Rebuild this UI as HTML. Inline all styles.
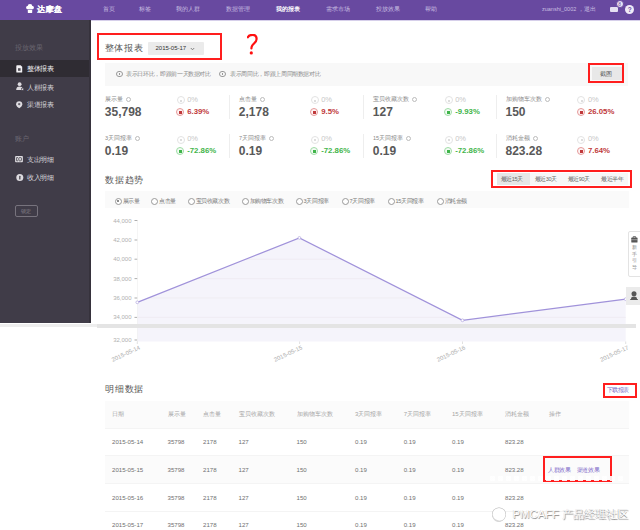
<!DOCTYPE html>
<html><head><meta charset="utf-8">
<style>
*{margin:0;padding:0;box-sizing:border-box}
html,body{width:640px;height:530px;overflow:hidden;background:#fff}
body{position:relative;font-family:"Liberation Sans",sans-serif;color:#666}
.a{position:absolute;white-space:nowrap}
#nav{left:0;top:0;width:640px;height:20.3px;background:#6849a0}
.ni{font-size:6px;color:#c9bfe0;top:6px;line-height:7px}
#side{left:0;top:20px;width:91px;height:303px;background:#403c48}
.sg{font-size:6.5px;color:#6a6670;line-height:7px}
.si{font-size:6.5px;color:#d8d6dc;line-height:7px;letter-spacing:-0.5px}
.ico{position:absolute;background:#e8e6ea}
.red{position:absolute;border:2px solid #ff1e1e}
.lbl{font-size:5.5px;color:#888;line-height:6px}
.big{font-size:12px;font-weight:bold;color:#595959;line-height:13px}
.pct0{font-size:7.5px;color:#c8c8c8;line-height:9px}
.pr{font-size:7.8px;font-weight:bold;color:#c0393b;line-height:9px}
.pg{font-size:7.8px;font-weight:bold;color:#3fb54a;line-height:9px}
.circ{position:absolute;border-radius:50%}
.vd{position:absolute;width:1px;background:#eee}
.h2{font-size:9.45px;letter-spacing:0.75px;color:#555;line-height:11px}
.rd{font-size:5.5px;color:#888;line-height:6px;letter-spacing:-0.35px}
.th{font-size:6px;color:#a5a5a5;line-height:6px}
.td{font-size:6.1px;color:#707070;line-height:6px}
.c0{width:8px;height:8px;border:0.9px solid #e3e3e3}
.c0 i{position:absolute;left:2.4px;top:2.4px;width:2.2px;height:2.2px;background:#ddd}
.cb{width:8px;height:8px;border:1px solid}
.cb i{position:absolute;left:2.2px;top:2.2px;width:2.6px;height:2.6px}
.prc{border-color:#e59a9a;background:#fdf3f3}.prc i{background:#c0393b}
.pgc{border-color:#9fdca6;background:#f3fbf4}.pgc i{background:#3fb54a}
.qi{display:inline-block;width:5px;height:5px;border:0.8px solid #bbb;border-radius:50%;margin-left:3px;vertical-align:-0.5px}
</style></head><body>

<!-- NAV -->
<div id="nav" class="a"></div>
<div class="a" style="left:25.5px;top:3.7px;width:8px;height:10px">
  <svg style="display:block" width="8" height="10" viewBox="0 0 8 10"><circle cx="2" cy="3.6" r="1.9" fill="#fff"/><circle cx="4" cy="2.4" r="2.3" fill="#fff"/><circle cx="6" cy="3.6" r="1.9" fill="#fff"/><rect x="1.8" y="4.2" width="4.4" height="4.8" rx="0.4" fill="#fff"/><rect x="1.2" y="5.4" width="5.6" height="0.6" fill="#6849a0"/></svg>
</div>
<div class="a" style="left:37px;top:4.5px;font-size:8px;font-weight:bold;color:#fff;line-height:10px;letter-spacing:0.4px;text-shadow:0.25px 0 0 #fff">达摩盘</div>
<div class="a ni" style="left:103px">首页</div>
<div class="a ni" style="left:139px">标签</div>
<div class="a ni" style="left:176px">我的人群</div>
<div class="a ni" style="left:226px">数据管理</div>
<div class="a ni" style="left:276px;color:#fff;font-weight:bold">我的报表</div>
<div class="a ni" style="left:326px">需求市场</div>
<div class="a ni" style="left:376px">投放效果</div>
<div class="a ni" style="left:425px">帮助</div>
<div class="a ni" style="left:542px;font-size:5.5px">zuanshi_0002 ，退出</div>
<div class="a" style="left:609.5px;top:7px;width:8px;height:5px;background:#e6e0f2;border-radius:1px"></div>
<div class="circ" style="left:615.5px;top:-0.5px;width:8px;height:8px;background:#efeaf7;border:0.8px solid #6849a0"></div><div class="a" style="left:618.2px;top:0.6px;font-size:5px;color:#6849a0;line-height:6px">8</div>
<div class="circ" style="left:625.3px;top:5px;width:9px;height:9px;background:#efeaf7"></div>
<div class="a" style="left:627.7px;top:5px;font-size:6.5px;font-weight:bold;color:#6849a0;line-height:9px">?</div>
<div class="a" style="left:91px;top:20.2px;width:549px;height:1.2px;background:#d6cfea"></div>

<!-- SIDEBAR -->
<div id="side" class="a"></div>
<div class="a" style="left:89.3px;top:20px;width:1.7px;height:303px;background:#36323c"></div>
<div class="a sg" style="left:15px;top:44px">投放效果</div>
<div class="a" style="left:0;top:60px;width:89.3px;height:17px;background:#2f2c33"></div>
<svg class="a" style="left:16px;top:64.5px" width="7" height="8" viewBox="0 0 7 8"><path d="M0.3,1 Q0.3,0.2 1,0.2 L4.6,0.2 L6.2,1.8 L6.2,7 Q6.2,7.6 5.6,7.6 L1,7.6 Q0.3,7.6 0.3,7 Z" fill="#f2f1f4"/><rect x="2" y="3.2" width="2.6" height="2.6" fill="#55525a"/></svg>
<div class="a si" style="left:27px;top:65px;color:#f4f3f6">整体报表</div>
<svg class="a" style="left:15.5px;top:82.2px" width="8" height="8.5" viewBox="0 0 8 8.5"><circle cx="3.6" cy="2.2" r="1.9" fill="#dddbe0"/><path d="M0.2,8 Q0.2,4.6 3.6,4.6 Q6.4,4.6 6.8,6.5 L6.8,8 Z" fill="#dddbe0"/><rect x="5.3" y="6.2" width="2.2" height="2" fill="#dddbe0" stroke="#403c48" stroke-width="0.5"/></svg>
<div class="a si" style="left:27px;top:83.5px">人群报表</div>
<svg class="a" style="left:16px;top:101.3px" width="7" height="7.5" viewBox="0 0 7 7.5"><path d="M3.2,0.2 C5.2,0.2 6.3,1.5 6.3,3.2 C6.3,5 4.6,6.5 3.2,7.3 C1.8,6.5 0.1,5 0.1,3.2 C0.1,1.5 1.2,0.2 3.2,0.2 Z" fill="#dddbe0"/><circle cx="3.2" cy="3.1" r="1.2" fill="#6a6670"/></svg>
<div class="a si" style="left:27px;top:101px">渠道报表</div>
<div class="a sg" style="left:15px;top:134.5px">账户</div>
<svg class="a" style="left:15px;top:156.2px" width="8" height="6.5" viewBox="0 0 8 6.5"><rect x="0.1" y="0.1" width="7.8" height="6.2" rx="0.8" fill="#dddbe0"/><path d="M3,1.6 L1.6,1.6 L1.6,4.8 L3,4.8" fill="none" stroke="#55525a" stroke-width="0.9"/><rect x="3.8" y="1.6" width="2.6" height="3.2" rx="0.6" fill="none" stroke="#55525a" stroke-width="0.9"/></svg>
<div class="a si" style="left:27px;top:155.5px">支出明细</div>
<svg class="a" style="left:15.5px;top:173.5px" width="8" height="8" viewBox="0 0 8 8"><circle cx="3.8" cy="3.6" r="3.5" fill="#dddbe0"/><rect x="3.1" y="1.8" width="1.4" height="3.8" rx="0.5" fill="#55525a"/></svg>
<div class="a si" style="left:27px;top:173.5px">收入明细</div>
<div class="a" style="left:15px;top:205px;width:23px;height:12px;border:1px solid #77737d;border-radius:2px"></div>
<div class="a" style="left:21px;top:208px;font-size:5px;color:#8a8690;line-height:6px">锁定</div>

<!-- HEADER -->
<div class="red" style="left:97px;top:33px;width:125px;height:27px"></div>
<div class="a h2" style="left:104.5px;top:41.5px;font-size:9.45px">整体报表</div>
<div class="a" style="left:148px;top:41.5px;width:56px;height:13px;background:#ebebeb;border-radius:1px"></div>
<div class="a" style="left:155.5px;top:44.5px;font-size:6px;color:#333;line-height:7px">2015-05-17</div><svg class="a" style="left:189.5px;top:46.5px" width="5" height="4" viewBox="0 0 5 4"><path d="M0.8,1 L2.5,2.8 L4.2,1" fill="none" stroke="#777" stroke-width="0.9"/></svg>
<svg class="a" style="left:246.5px;top:33.7px" width="12" height="22" viewBox="0 0 12 22"><path d="M0.8,3.3 C1.6,1.3 3.6,0.9 5.5,0.9 C8.5,0.9 9.6,2.8 9.6,5 C9.6,8 6.8,9.3 5.2,11.6 C4.6,12.6 4.4,13.4 4.4,14.5" fill="none" stroke="#ff1010" stroke-width="2.2" stroke-linecap="round"/><circle cx="4.3" cy="18.9" r="1.6" fill="#ff1010"/></svg>

<!-- INFO BAR -->
<div class="a" style="left:105px;top:63px;width:523px;height:23px;background:#f8f8f8"></div>
<div class="circ" style="left:116.3px;top:70.8px;width:6.6px;height:6.6px;border:0.9px solid #999"><i style="position:absolute;left:1.6px;top:1.6px;width:1.6px;height:1.6px;background:#999"></i></div>
<div class="a rd" style="left:126px;top:71px;letter-spacing:-0.35px">表示日环比，即跟前一天数据对比</div>
<div class="circ" style="left:219.3px;top:70.8px;width:6.6px;height:6.6px;border:0.9px solid #999"><i style="position:absolute;left:1.6px;top:1.6px;width:1.6px;height:1.6px;background:#999"></i></div>
<div class="a rd" style="left:230px;top:71px;letter-spacing:-0.35px">表示周同比，即跟上周同期数据对比</div>
<div class="a" style="left:591.5px;top:66.5px;width:30px;height:13.5px;background:#e8e8e8"></div>
<div class="a" style="left:600px;top:70.5px;font-size:5.5px;color:#555;line-height:6px">截图</div>
<div class="red" style="left:588px;top:63px;width:36px;height:19.5px"></div>

<!-- STATS -->
<div class="a lbl" style="left:105.0px;top:96.0px">展示量<span class="qi"></span></div>
<div class="a big" style="left:104.8px;top:105.8px">35,798</div>
<div class="circ c0" style="left:176.6px;top:96.3px"><i></i></div>
<div class="a pct0" style="left:187.2px;top:95.0px">0%</div>
<div class="circ cb prc" style="left:176.3px;top:108.0px"><i></i></div>
<div class="a pr" style="left:187.2px;top:106.5px">6.39%</div>
<div class="vd" style="left:229.0px;top:94.5px;height:24px"></div>
<div class="a lbl" style="left:239.0px;top:96.0px">点击量<span class="qi"></span></div>
<div class="a big" style="left:238.8px;top:105.8px">2,178</div>
<div class="circ c0" style="left:310.6px;top:96.3px"><i></i></div>
<div class="a pct0" style="left:321.2px;top:95.0px">0%</div>
<div class="circ cb prc" style="left:310.3px;top:108.0px"><i></i></div>
<div class="a pr" style="left:321.2px;top:106.5px">9.5%</div>
<div class="vd" style="left:363.0px;top:94.5px;height:24px"></div>
<div class="a lbl" style="left:373.0px;top:96.0px">宝贝收藏次数<span class="qi"></span></div>
<div class="a big" style="left:372.8px;top:105.8px">127</div>
<div class="circ c0" style="left:444.6px;top:96.3px"><i></i></div>
<div class="a pct0" style="left:455.2px;top:95.0px">0%</div>
<div class="circ cb pgc" style="left:444.3px;top:108.0px"><i></i></div>
<div class="a pg" style="left:455.2px;top:106.5px">-9.93%</div>
<div class="vd" style="left:495.7px;top:94.5px;height:24px"></div>
<div class="a lbl" style="left:505.7px;top:96.0px">加购物车次数<span class="qi"></span></div>
<div class="a big" style="left:505.5px;top:105.8px">150</div>
<div class="circ c0" style="left:577.3px;top:96.3px"><i></i></div>
<div class="a pct0" style="left:587.9px;top:95.0px">0%</div>
<div class="circ cb prc" style="left:577.0px;top:108.0px"><i></i></div>
<div class="a pr" style="left:587.9px;top:106.5px">26.05%</div>
<div class="a lbl" style="left:105.0px;top:135.3px">3天回报率<span class="qi"></span></div>
<div class="a big" style="left:104.8px;top:145.1px">0.19</div>
<div class="circ c0" style="left:176.6px;top:135.6px"><i></i></div>
<div class="a pct0" style="left:187.2px;top:134.3px">0%</div>
<div class="circ cb pgc" style="left:176.3px;top:147.3px"><i></i></div>
<div class="a pg" style="left:187.2px;top:145.8px">-72.86%</div>
<div class="vd" style="left:229.0px;top:133.8px;height:24px"></div>
<div class="a lbl" style="left:239.0px;top:135.3px">7天回报率<span class="qi"></span></div>
<div class="a big" style="left:238.8px;top:145.1px">0.19</div>
<div class="circ c0" style="left:310.6px;top:135.6px"><i></i></div>
<div class="a pct0" style="left:321.2px;top:134.3px">0%</div>
<div class="circ cb pgc" style="left:310.3px;top:147.3px"><i></i></div>
<div class="a pg" style="left:321.2px;top:145.8px">-72.86%</div>
<div class="vd" style="left:363.0px;top:133.8px;height:24px"></div>
<div class="a lbl" style="left:373.0px;top:135.3px">15天回报率<span class="qi"></span></div>
<div class="a big" style="left:372.8px;top:145.1px">0.19</div>
<div class="circ c0" style="left:444.6px;top:135.6px"><i></i></div>
<div class="a pct0" style="left:455.2px;top:134.3px">0%</div>
<div class="circ cb pgc" style="left:444.3px;top:147.3px"><i></i></div>
<div class="a pg" style="left:455.2px;top:145.8px">-72.86%</div>
<div class="vd" style="left:495.7px;top:133.8px;height:24px"></div>
<div class="a lbl" style="left:505.7px;top:135.3px">消耗金额<span class="qi"></span></div>
<div class="a big" style="left:505.5px;top:145.1px">823.28</div>
<div class="circ c0" style="left:577.3px;top:135.6px"><i></i></div>
<div class="a pct0" style="left:587.9px;top:134.3px">0%</div>
<div class="circ cb prc" style="left:577.0px;top:147.3px"><i></i></div>
<div class="a pr" style="left:587.9px;top:145.8px">7.64%</div>
<!-- TREND -->
<div class="a h2" style="left:105px;top:173.5px">数据趋势</div>
<div class="red" style="left:490.5px;top:170px;width:141.5px;height:17.5px"></div>
<div class="a" style="left:497px;top:173px;width:130.5px;height:12px;background:#f7f7f7"></div>
<div class="a" style="left:497px;top:173px;width:32.5px;height:12px;background:#e6e6e6"></div>
<div class="a rd" style="left:500.5px;top:176px;color:#666">最近15天</div>
<div class="a rd" style="left:534.5px;top:176px;color:#666">最近30天</div>
<div class="a rd" style="left:567.5px;top:176px;color:#666">最近90天</div>
<div class="a rd" style="left:601px;top:176px;color:#666">最近半年</div>
<div class="a" style="left:105px;top:191px;width:524px;height:17px;background:#fafafa"></div>
<div class="circ" style="left:114.5px;top:197.5px;width:7px;height:7px;border:0.8px solid #999;background:#fff"></div>
<div class="circ" style="left:116.8px;top:199.8px;width:2.4px;height:2.4px;background:#666"></div>
<div class="a rd" style="left:122.5px;top:198px;color:#777">展示量</div>
<div class="circ" style="left:151.0px;top:197.5px;width:7px;height:7px;border:0.8px solid #999;background:#fff"></div>
<div class="a rd" style="left:159.0px;top:198px;color:#777">点击量</div>
<div class="circ" style="left:187.5px;top:197.5px;width:7px;height:7px;border:0.8px solid #999;background:#fff"></div>
<div class="a rd" style="left:195.5px;top:198px;color:#777">宝贝收藏次数</div>
<div class="circ" style="left:241.5px;top:197.5px;width:7px;height:7px;border:0.8px solid #999;background:#fff"></div>
<div class="a rd" style="left:249.5px;top:198px;color:#777">加购物车次数</div>
<div class="circ" style="left:295.5px;top:197.5px;width:7px;height:7px;border:0.8px solid #999;background:#fff"></div>
<div class="a rd" style="left:303.5px;top:198px;color:#777">3天回报率</div>
<div class="circ" style="left:341.5px;top:197.5px;width:7px;height:7px;border:0.8px solid #999;background:#fff"></div>
<div class="a rd" style="left:349.5px;top:198px;color:#777">7天回报率</div>
<div class="circ" style="left:387.5px;top:197.5px;width:7px;height:7px;border:0.8px solid #999;background:#fff"></div>
<div class="a rd" style="left:395.5px;top:198px;color:#777">15天回报率</div>
<div class="circ" style="left:436.5px;top:197.5px;width:7px;height:7px;border:0.8px solid #999;background:#fff"></div>
<div class="a rd" style="left:444.5px;top:198px;color:#777">消耗金额</div>
<!-- CHART -->
<svg class="a" style="left:0;top:0" width="640" height="530" viewBox="0 0 640 530">
<text x="131.5" y="222.5" text-anchor="end" font-size="6" fill="#b0b0b0" font-family="Liberation Sans, sans-serif">44,000</text>
<line x1="134.5" y1="220.5" x2="137.5" y2="220.5" stroke="#777" stroke-width="0.6"/>
<text x="131.5" y="242" text-anchor="end" font-size="6" fill="#b0b0b0" font-family="Liberation Sans, sans-serif">42,000</text>
<line x1="134.5" y1="240" x2="137.5" y2="240" stroke="#777" stroke-width="0.6"/>
<text x="131.5" y="261.2" text-anchor="end" font-size="6" fill="#b0b0b0" font-family="Liberation Sans, sans-serif">40,000</text>
<line x1="134.5" y1="259.2" x2="137.5" y2="259.2" stroke="#777" stroke-width="0.6"/>
<text x="131.5" y="280.6" text-anchor="end" font-size="6" fill="#b0b0b0" font-family="Liberation Sans, sans-serif">38,000</text>
<line x1="134.5" y1="278.6" x2="137.5" y2="278.6" stroke="#777" stroke-width="0.6"/>
<text x="131.5" y="300" text-anchor="end" font-size="6" fill="#b0b0b0" font-family="Liberation Sans, sans-serif">36,000</text>
<line x1="134.5" y1="298" x2="137.5" y2="298" stroke="#777" stroke-width="0.6"/>
<text x="131.5" y="319.4" text-anchor="end" font-size="6" fill="#b0b0b0" font-family="Liberation Sans, sans-serif">34,000</text>
<line x1="134.5" y1="317.4" x2="137.5" y2="317.4" stroke="#777" stroke-width="0.6"/>
<text x="131.5" y="342" text-anchor="end" font-size="6" fill="#b0b0b0" font-family="Liberation Sans, sans-serif">32,000</text>
<line x1="134.5" y1="340" x2="137.5" y2="340" stroke="#777" stroke-width="0.6"/>
<polygon points="137.3,302.3 299.4,237.9 462.5,320.3 625.7,299.2 625.7,341.5 137.3,341.5" fill="#f5f4fb"/><clipPath id="cp"><polygon points="137.3,302.3 299.4,237.9 462.5,320.3 625.7,299.2 625.7,341.5 137.3,341.5"/></clipPath><g clip-path="url(#cp)" stroke="#eee9ef" stroke-width="0.7"><line x1="137" y1="259.2" x2="626" y2="259.2"/><line x1="137" y1="278.6" x2="626" y2="278.6"/><line x1="137" y1="298" x2="626" y2="298"/><line x1="137" y1="317.4" x2="626" y2="317.4"/></g>
<line x1="137.5" y1="220.5" x2="137.5" y2="342" stroke="#eee" stroke-width="0.6"/>
<polyline points="137.3,302.3 299.4,237.9 462.5,320.3 625.7,299.2" fill="none" stroke="#a092da" stroke-width="1.25"/>
<circle cx="137.3" cy="302.3" r="1.4" fill="#fff" stroke="#a89ad8" stroke-width="0.6"/>
<circle cx="299.4" cy="237.9" r="1.4" fill="#fff" stroke="#a89ad8" stroke-width="0.6"/>
<circle cx="462.5" cy="320.3" r="1.4" fill="#fff" stroke="#a89ad8" stroke-width="0.6"/>
<circle cx="625.7" cy="299.2" r="1.4" fill="#fff" stroke="#a89ad8" stroke-width="0.6"/>
<line x1="137.3" y1="341.5" x2="137.3" y2="344" stroke="#ccc" stroke-width="0.6"/>
<text x="140.6" y="349" text-anchor="end" font-size="6" fill="#aaa" font-family="Liberation Sans, sans-serif" transform="rotate(-25 140.6 349)">2015-05-14</text>
<line x1="299.6" y1="341.5" x2="299.6" y2="344" stroke="#ccc" stroke-width="0.6"/>
<text x="302.9" y="349" text-anchor="end" font-size="6" fill="#aaa" font-family="Liberation Sans, sans-serif" transform="rotate(-25 302.9 349)">2015-05-15</text>
<line x1="462.5" y1="341.5" x2="462.5" y2="344" stroke="#ccc" stroke-width="0.6"/>
<text x="465.8" y="349" text-anchor="end" font-size="6" fill="#aaa" font-family="Liberation Sans, sans-serif" transform="rotate(-25 465.8 349)">2015-05-16</text>
<line x1="625.7" y1="341.5" x2="625.7" y2="344" stroke="#ccc" stroke-width="0.6"/>
<text x="629.0" y="349" text-anchor="end" font-size="6" fill="#aaa" font-family="Liberation Sans, sans-serif" transform="rotate(-25 629.0 349)">2015-05-17</text>
</svg>
<div class="a" style="left:0;top:323.5px;width:97px;height:3.5px;background:#eeeeee"></div>
<div class="a" style="left:97px;top:323.6px;width:539px;height:4.6px;background:#e4e4e4"></div>
<div class="a" style="left:628.2px;top:230.5px;width:14px;height:46px;background:#fff;border:1px solid #e3e3e3;border-radius:2px"></div>
<svg class="a" style="left:631px;top:235.5px" width="7" height="7" viewBox="0 0 7 7"><rect x="0.3" y="1.6" width="6.2" height="5" rx="0.6" fill="#555"/><path d="M2.2,1.8 L2.2,0.6 L4.6,0.6 L4.6,1.8" fill="none" stroke="#555" stroke-width="0.8"/><rect x="0.3" y="3.6" width="6.2" height="0.5" fill="#ddd"/></svg>
<div class="a" style="left:631.5px;top:244.0px;font-size:5px;color:#888;line-height:6px">新</div>
<div class="a" style="left:631.5px;top:250.5px;font-size:5px;color:#888;line-height:6px">手</div>
<div class="a" style="left:631.5px;top:257.0px;font-size:5px;color:#888;line-height:6px">引</div>
<div class="a" style="left:631.5px;top:263.5px;font-size:5px;color:#888;line-height:6px">导</div>
<div class="a" style="left:626.3px;top:287px;width:14px;height:17.5px;background:#ebebeb"></div>
<svg class="a" style="left:629px;top:290px" width="10" height="11" viewBox="0 0 10 11"><circle cx="5" cy="3.8" r="2.5" fill="#555"/><path d="M2,9 Q2.2,6.6 5,6.6 Q7.8,6.6 8,9 Z" fill="#555"/><rect x="1.2" y="9" width="7.6" height="1" fill="#555"/></svg>
<!-- TABLE -->
<div class="a h2" style="left:105px;top:383px">明细数据</div>
<div class="a" style="left:606.8px;top:387px;font-size:5.5px;color:#7b68c8;line-height:6px;letter-spacing:-0.5px">下载报表</div>
<div class="red" style="left:603px;top:383px;width:33.5px;height:15px"></div>
<div class="a" style="left:105px;top:400.5px;width:524px;height:27px;background:#fbfbfb"></div>
<div class="a th" style="left:112px;top:411px">日期</div>
<div class="a th" style="left:167.5px;top:411px">展示量</div>
<div class="a th" style="left:203px;top:411px">点击量</div>
<div class="a th" style="left:238.5px;top:411px">宝贝收藏次数</div>
<div class="a th" style="left:296.5px;top:411px">加购物车次数</div>
<div class="a th" style="left:355px;top:411px">3天回报率</div>
<div class="a th" style="left:403.7px;top:411px">7天回报率</div>
<div class="a th" style="left:452px;top:411px">15天回报率</div>
<div class="a th" style="left:505px;top:411px">消耗金额</div>
<div class="a th" style="left:548.7px;top:411px">操作</div>
<div class="a" style="left:105px;top:455px;width:524px;height:28px;background:#fbfbfb"></div>
<div class="a" style="left:105px;top:427.5px;width:524px;height:1px;background:#f4f4f4"></div>
<div class="a" style="left:105px;top:454.5px;width:524px;height:1px;background:#f4f4f4"></div>
<div class="a" style="left:105px;top:483px;width:524px;height:1px;background:#f4f4f4"></div>
<div class="a" style="left:105px;top:511px;width:524px;height:1px;background:#f4f4f4"></div>
<div class="a td" style="left:112px;top:438.75px">2015-05-14</div>
<div class="a td" style="left:167.5px;top:438.75px">35798</div>
<div class="a td" style="left:203px;top:438.75px">2178</div>
<div class="a td" style="left:238.5px;top:438.75px">127</div>
<div class="a td" style="left:296.5px;top:438.75px">150</div>
<div class="a td" style="left:355px;top:438.75px">0.19</div>
<div class="a td" style="left:403.7px;top:438.75px">0.19</div>
<div class="a td" style="left:452px;top:438.75px">0.19</div>
<div class="a td" style="left:505px;top:438.75px">823.28</div>
<div class="a td" style="left:112px;top:466.5px">2015-05-15</div>
<div class="a td" style="left:167.5px;top:466.5px">35798</div>
<div class="a td" style="left:203px;top:466.5px">2178</div>
<div class="a td" style="left:238.5px;top:466.5px">127</div>
<div class="a td" style="left:296.5px;top:466.5px">150</div>
<div class="a td" style="left:355px;top:466.5px">0.19</div>
<div class="a td" style="left:403.7px;top:466.5px">0.19</div>
<div class="a td" style="left:452px;top:466.5px">0.19</div>
<div class="a td" style="left:505px;top:466.5px">823.28</div>
<div class="a td" style="left:112px;top:494.5px">2015-05-16</div>
<div class="a td" style="left:167.5px;top:494.5px">35798</div>
<div class="a td" style="left:203px;top:494.5px">2178</div>
<div class="a td" style="left:238.5px;top:494.5px">127</div>
<div class="a td" style="left:296.5px;top:494.5px">150</div>
<div class="a td" style="left:355px;top:494.5px">0.19</div>
<div class="a td" style="left:403.7px;top:494.5px">0.19</div>
<div class="a td" style="left:452px;top:494.5px">0.19</div>
<div class="a td" style="left:505px;top:494.5px">823.28</div>
<div class="a td" style="left:112px;top:522px">2015-05-17</div>
<div class="a td" style="left:167.5px;top:522px">35798</div>
<div class="a td" style="left:203px;top:522px">2178</div>
<div class="a td" style="left:238.5px;top:522px">127</div>
<div class="a td" style="left:296.5px;top:522px">150</div>
<div class="a td" style="left:355px;top:522px">0.19</div>
<div class="a td" style="left:403.7px;top:522px">0.19</div>
<div class="a td" style="left:452px;top:522px">0.19</div>
<div class="a td" style="left:505px;top:522px">823.28</div>
<div class="a" style="left:548px;top:466.5px;font-size:5.5px;color:#7b68c8;line-height:6px;letter-spacing:-0.3px">人群效果</div>
<div class="a" style="left:576.6px;top:466.5px;font-size:5.5px;color:#7b68c8;line-height:6px;letter-spacing:-0.3px">渠道效果</div>
<div class="red" style="left:543px;top:456px;width:69px;height:25.5px"></div>
<div class="a" style="left:490px;top:476px;width:136px;height:5px;background:repeating-linear-gradient(90deg,#fff 0 5px,transparent 5px 8px);opacity:0.9"></div>
<svg class="a" style="left:489px;top:505px" width="20" height="19" viewBox="0 0 20 19"><defs><filter id="sh" x="-30%" y="-30%" width="160%" height="160%"><feGaussianBlur stdDev="0.7" stdDeviation="0.7"/></filter></defs><circle cx="10" cy="9.5" r="7" fill="#9a9a9a" filter="url(#sh)" opacity="0.8"/><circle cx="10" cy="9.5" r="6.6" fill="#fff"/><path d="M4.5,8 A6,6 0 0 0 15,14 A6.5,5.5 0 0 1 4.5,8 Z" fill="#d8d8d8"/></svg>
<div class="a" style="left:512.5px;top:506.5px;font-size:11.3px;color:#fff;line-height:14px;letter-spacing:0.05px;text-shadow:0.7px 0.7px 0.7px #8f8f8f,-0.2px -0.2px 0.4px #c8c8c8">PMCAFF 产品经理社区</div>
</body></html>
